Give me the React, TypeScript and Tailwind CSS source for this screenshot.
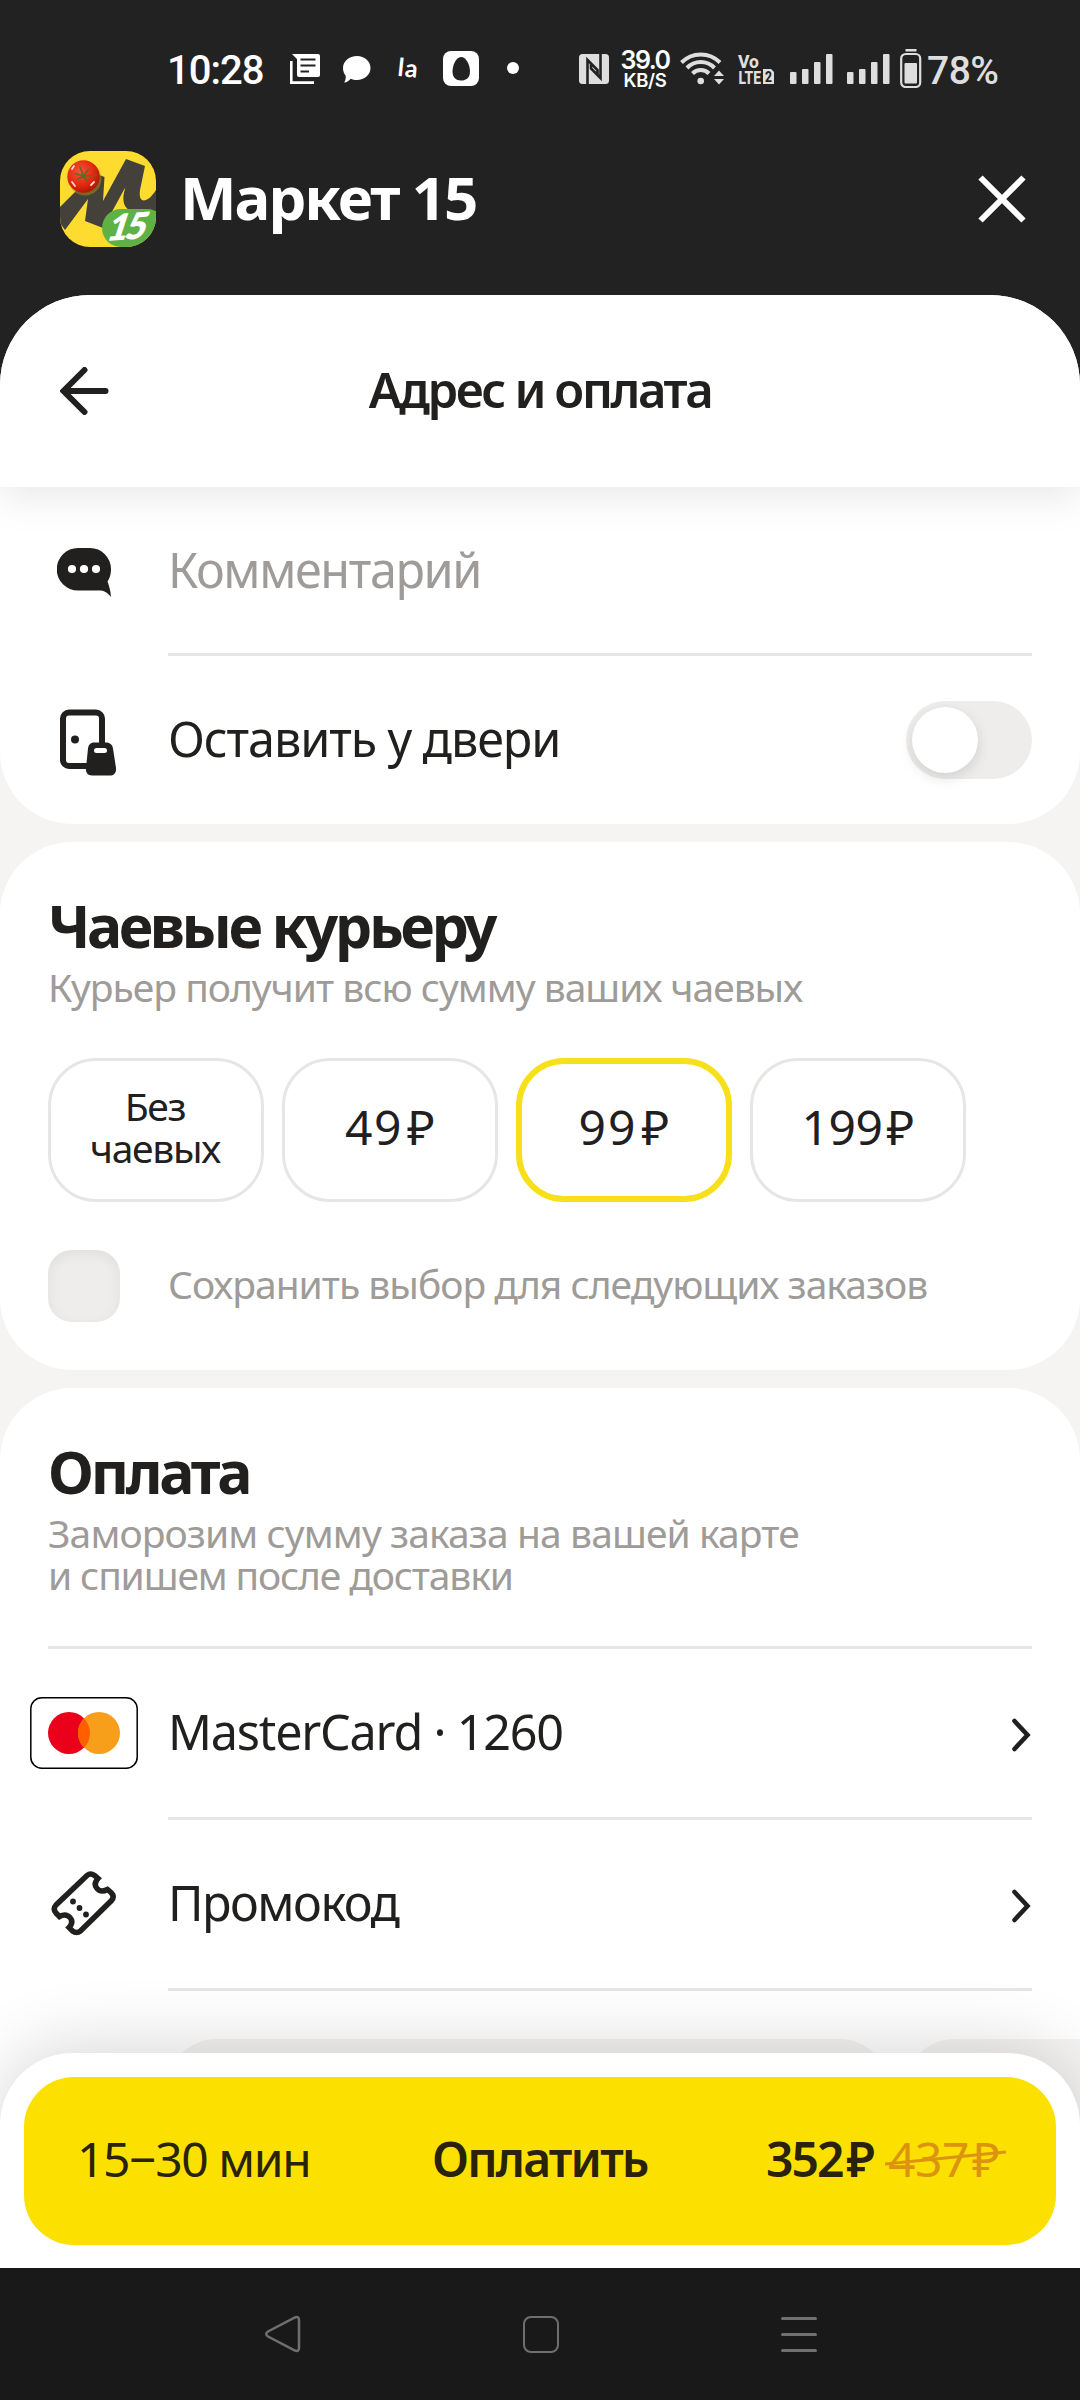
import { ReactNode } from "react";

const tips = [
  { id: 1, amount: "49", active: false, spacing: "tracking-[1.5px]" },
  { id: 2, amount: "99", active: true, spacing: "tracking-[2px]" },
  { id: 3, amount: "199", active: false, spacing: "tracking-[-0.5px]" },
];

function Signal() {
  return (
    <svg width="43" height="30" viewBox="0 0 43 30" fill="#dedede">
      <rect x="0" y="18" width="6.5" height="12" rx="1" />
      <rect x="12" y="15" width="6.5" height="15" rx="1" />
      <rect x="24" y="8" width="6.5" height="22" rx="1" />
      <rect x="36" y="0" width="6.5" height="30" rx="1" />
    </svg>
  );
}

function StatusBar() {
  return (
    <div className="flex h-[92px] shrink-0 items-start pl-[167px] font-['Roboto'] text-white">
      <span className="mt-[47px] w-[123px] text-[40px] font-medium leading-[48px] tracking-[-1px]">
        10:28
      </span>
      {/* news */}
      <svg className="mt-[54px]" width="30" height="30" viewBox="0 0 30 30">
        <path d="M2 0H28a2 2 0 0 1 2 2V21a2 2 0 0 1-2 2H9a2 2 0 0 1-2-2V5Z" fill="#fff" />
        <path d="M1.3 7V28.6H24" stroke="#fff" strokeWidth="2.6" fill="none" />
        <path d="M10.5 5.5H25.5M10.5 11.5H25.5M10.5 17.5H19" stroke="#222" strokeWidth="2.2" />
      </svg>
      {/* chat */}
      <svg className="ml-[23px] mt-[56px]" width="28" height="28" viewBox="0 0 28 28">
        <path d="M14 0C21.5 0 27.5 5.2 27.5 12S21.5 24 14 24C11.5 24 9.5 23.6 7.5 22.8 6 25 4 26.3 1.2 26.6 2.6 24 3 22 2.6 19.6 1 17.5 0 15 0 12 0 5.2 6.2 0 14 0Z" fill="#fff" />
      </svg>
      <span className="ml-[27px] mt-[53px] w-[24px] rotate-6 font-['Lato'] text-[25px] font-bold leading-[28px] tracking-[1px]">
        la
      </span>
      {/* egg */}
      <svg className="ml-[21px] mt-[51px]" width="36" height="35" viewBox="0 0 36 35">
        <rect width="36" height="35" rx="8" fill="#fff" />
        <path d="M18 6C23 6 27 14 27 20.5S23 29.5 18 29.5 9.5 26.5 9.5 20.5 13 6 18 6Z" fill="#222" />
      </svg>
      <span className="ml-[28px] mt-[62px] h-[12px] w-[12px] rounded-full bg-white" />
      {/* nfc */}
      <svg className="ml-[60px] mt-[54px]" width="30" height="30" viewBox="0 0 30 30">
        <rect width="30" height="30" rx="3.5" fill="#dedede" />
        <path d="M8.5 30V6L18.5 16V21M21.5 0V24L12 14.5V10" stroke="#222" strokeWidth="2.6" fill="none" />
      </svg>
      <div className="ml-[10px] mt-[49px] flex w-[52px] flex-col items-center font-['Inter'] font-semibold">
        <span className="text-[25px] leading-[23px] tracking-[-1.5px]">39.0</span>
        <span className="text-[18.5px] leading-[17px] tracking-[-0.3px]">KB/S</span>
      </div>
      {/* wifi */}
      <svg className="ml-[9px] mt-[51px]" width="45" height="34" viewBox="0 0 45 34">
        <g fill="none" stroke="#dedede" strokeWidth="4">
          <path d="M1.5 11.5A27 27 0 0 1 40 11.5" />
          <path d="M7 17A19 19 0 0 1 34.5 17" />
          <path d="M12.5 22.5A11.5 11.5 0 0 1 29 22.5" />
        </g>
        <circle cx="20.7" cy="30" r="3.3" fill="#dedede" />
        <path d="M34 25L39 19.5L44 25ZM34 28L39 33.5L44 28Z" fill="#dedede" />
      </svg>
      {/* volte */}
      <svg className="ml-[13px] mt-[53px] overflow-visible" width="37" height="32" viewBox="0 0 37 32">
        <g fill="#dedede" fontFamily="Roboto" fontWeight="800">
          <text x="0" y="14.5" fontSize="18" textLength="21" lengthAdjust="spacingAndGlyphs">Vo</text>
          <text x="0.5" y="31" fontSize="19" textLength="22.5" lengthAdjust="spacingAndGlyphs">LTE</text>
          <path d="M25 16H33L36 19V31H25Z" />
          <text x="27" y="29" fontSize="14" fill="#222" textLength="7" lengthAdjust="spacingAndGlyphs">2</text>
        </g>
      </svg>
      <div className="ml-[15px] mt-[54px]"><Signal /></div>
      <div className="ml-[14px] mt-[54px]"><Signal /></div>
      {/* battery */}
      <svg className="ml-[10px] mt-[49px]" width="22" height="39" viewBox="0 0 22 39">
        <rect x="5.5" y="0" width="11" height="2.5" fill="#dedede" />
        <rect x="1.2" y="5" width="19" height="33" rx="4.5" fill="none" stroke="#dedede" strokeWidth="2.2" />
        <rect x="4.5" y="14" width="12.5" height="20.5" rx="1" fill="#dedede" />
      </svg>
      <span className="ml-[5px] mt-[47px] text-[39px] font-medium leading-[48px] tracking-[-0.5px] text-[#dedede]">
        78%
      </span>
    </div>
  );
}

function MarketLogo() {
  return (
    <svg width="96" height="96" viewBox="0 0 96 96">
      <defs>
        <clipPath id="logoClip"><rect width="96" height="96" rx="30" /></clipPath>
        <radialGradient id="tomato" cx="0.4" cy="0.35" r="0.7">
          <stop offset="0" stopColor="#f4553a" />
          <stop offset="0.6" stopColor="#e2290f" />
          <stop offset="1" stopColor="#a81404" />
        </radialGradient>
      </defs>
      <g clipPath="url(#logoClip)">
        <rect width="96" height="96" fill="#fddb2f" />
        <path d="M0 56L34 22L44.5 26L43 50L66 8L85 15L80 39C78 53 87 53 96 39V60H56L63 50C62 46 64 41 65 37L43 77L25 70L28 48L5 79L0 72Z" fill="#43413a" />
        <path d="M54 59L65 37C62 48 63 55 69 59Z" fill="#fddb2f" />
        <circle cx="25" cy="28" r="16.5" fill="#b98a10" opacity="0.5" />
        <circle cx="23.5" cy="25.5" r="16.2" fill="url(#tomato)" />
        <path d="M23.5 25L15 22.5M23.5 25L20 16M23.5 25L28 19M23.5 25L36 24.5M23.5 25L27 30M23.5 25L18 28" stroke="#5d6b22" strokeWidth="1.6" strokeLinecap="round" />
        <path d="M12 31L15 35M12 18L14 15M31 34L34 31" stroke="#ffd6cc" strokeWidth="1.8" strokeLinecap="round" />
        <rect x="42" y="58" width="64" height="38" rx="19" fill="#5fb146" />
        <text
          fontFamily="Lato"
          fontSize="36"
          fontWeight="800"
          fill="#fff"
          textLength="39"
          transform="translate(45 90) rotate(-4) skewX(-22)"
        >
          15
        </text>
      </g>
    </svg>
  );
}

function Chevron() {
  return (
    <svg className="mt-[3px]" width="20" height="34" viewBox="0 0 20 34">
      <path d="M2.5 3L15.5 17L2.5 31" fill="none" stroke="#21201f" strokeWidth="4.6" strokeLinecap="round" />
    </svg>
  );
}

function Row({ icon, children, right }: { icon: ReactNode; children: ReactNode; right?: ReactNode }) {
  return (
    <div className="flex h-[168px] items-center pr-12">
      <div className="flex w-[168px] justify-center">{icon}</div>
      <div className="flex-1 pb-[4px] text-[48.5px] leading-[56px]">{children}</div>
      {right}
    </div>
  );
}

function Divider() {
  return <div className="ml-[168px] mr-12 h-[3px] bg-[#e7e6e5]" />;
}

export default function App() {
  return (
    <div className="flex h-[2400px] w-[1080px] flex-col overflow-hidden bg-[#222222] font-['Noto_Sans',sans-serif] text-[#21201f]">
      <StatusBar />

      <div className="flex h-[203px] shrink-0 items-start pl-[60px] pt-[59px]">
        <MarketLogo />
        <h1 className="ml-[24px] flex-1 text-[60px] font-bold leading-[92px] tracking-[-2.1px] text-white">
          Маркет 15
        </h1>
        <svg className="mr-[54px] mt-[24px]" width="48" height="48" viewBox="0 0 48 48">
          <path d="M2.5 2.5L45.5 45.5M45.5 2.5L2.5 45.5" stroke="#fff" strokeWidth="6" />
        </svg>
      </div>

      <div className="relative flex min-h-0 flex-1 flex-col overflow-hidden rounded-t-[90px] bg-[#f5f4f2]">
        {/* header */}
        <div className="relative z-10 flex h-[192px] shrink-0 items-center justify-center bg-white shadow-[0_8px_40px_rgba(0,0,0,0.1)]">
          <svg className="absolute left-[60px] top-[72px]" width="50" height="48" viewBox="0 0 50 48">
            <path d="M24.5 3L3.5 24L24.5 45M4 24H45.5" fill="none" stroke="#21201f" strokeWidth="6" strokeLinecap="round" />
          </svg>
          <h2 className="pb-[5px] text-[49px] font-semibold leading-[60px] tracking-[-2.4px]">Адрес и оплата</h2>
        </div>

        <div className="-mt-[2px] rounded-b-[72px] bg-white">
          <Row
            icon={
              <svg className="mt-[7px]" width="54" height="50" viewBox="0 0 54 50">
                <path d="M21 0H33A21 21 0 0 1 54 21C54 27 52.5 30.5 50.5 33.5C52 37.5 53.5 42 54 49C50 44 47 42.5 42 42.5H21A21 21 0 0 1 21 0Z" fill="#21201f" />
                <g fill="#fff">
                  <circle cx="15" cy="21" r="4.1" />
                  <circle cx="27" cy="21" r="4.1" />
                  <circle cx="39" cy="21" r="4.1" />
                </g>
              </svg>
            }
          >
            <span className="relative top-[2px] tracking-[-1.4px] text-[#9e9b98]">Комментарий</span>
          </Row>
          <Divider />
          <Row
            icon={
              <svg className="ml-[8px] mt-[6px]" width="56" height="68" viewBox="0 0 56 68">
                <rect x="3" y="3.5" width="39" height="53.5" rx="6" fill="none" stroke="#21201f" strokeWidth="6" />
                <circle cx="15" cy="30.5" r="4" fill="#21201f" />
                <path d="M34 33.5H46C50 33.5 52.5 36 53 39.5L56 59C56.5 63.5 54 66.5 50 66.5H32C27.5 66.5 25.5 63.5 26 59L28 39.5C28.5 36 30.5 33.5 34 33.5Z" fill="#21201f" />
                <rect x="34" y="39" width="13" height="5" rx="2.5" fill="#fff" />
              </svg>
            }
            right={
              <div className="flex h-[78px] w-[126px] items-center rounded-full bg-[#eeedec] pl-[6px]">
                <div className="h-[66px] w-[66px] rounded-full bg-white shadow-[0_5px_14px_rgba(0,0,0,0.12)]" />
              </div>
            }
          >
            <span className="tracking-[-1.1px]">Оставить у двери</span>
          </Row>
        </div>

        {/* tips */}
        <div className="mt-[18px] h-[528px] shrink-0 rounded-[72px] bg-white px-12 pt-[48px]">
          <h3 className="text-[59px] font-bold leading-[70px] tracking-[-3.4px]">Чаевые курьеру</h3>
          <p className="mt-[6px] text-[39px] leading-[42px] tracking-[-1px] text-[#9e9b98]">
            Курьер получит всю сумму ваших чаевых
          </p>
          <div className="mt-[50px] flex gap-[18px]">
            <button className="h-[144px] w-[216px] rounded-[48px] border-[3px] border-[#e7e6e5] pb-[6px] pr-[2px] text-center text-[39px] leading-[42px] tracking-[-1.3px]">
              Без
              <br />
              чаевых
            </button>
            {tips.map((tip) => (
              <button
                key={tip.id}
                className={`h-[144px] w-[216px] rounded-[48px] pb-[6px] text-[48px] ${
                  tip.active ? "border-[6px] border-[#f7df1a]" : "border-[3px] border-[#e7e6e5]"
                }`}
              >
                <span className={tip.spacing}>{tip.amount}</span>
                <span className="ml-[4px]">₽</span>
              </button>
            ))}
          </div>
          <div className="mt-[48px] flex items-center">
            <div className="h-[72px] w-[72px] rounded-[24px] bg-[#eeedec] shadow-[inset_0_4px_14px_rgba(0,0,0,0.06)]" />
            <span className="ml-[48px] pb-[4px] text-[39px] leading-[42px] tracking-[-1px] text-[#9e9b98]">
              Сохранить выбор для следующих заказов
            </span>
          </div>
        </div>

        {/* payment */}
        <div className="mt-[18px] h-[900px] shrink-0 rounded-t-[72px] bg-white">
          <div className="h-[258px] px-12 pt-[48px]">
            <h3 className="text-[59px] font-bold leading-[70px] tracking-[-3.2px]">Оплата</h3>
            <p className="mt-[6px] text-[39px] leading-[42px] text-[#9e9b98]">
              <span className="tracking-[-0.9px]">Заморозим сумму заказа на вашей карте</span>
              <br />
              <span className="tracking-[-1.15px]">и спишем после доставки</span>
            </p>
          </div>
          <div className="mx-12 h-[3px] bg-[#e7e6e5]" />
          <Row
            icon={
              <svg width="108" height="72" viewBox="0 0 108 72">
                <rect x="0.8" y="0.8" width="106.4" height="70.4" rx="11" fill="#fff" stroke="#000" strokeWidth="1.5" />
                <circle cx="39" cy="36" r="21" fill="#eb001b" />
                <circle cx="69" cy="36" r="21" fill="#f79e1b" />
                <path d="M54 21.3A21 21 0 0 1 54 50.7A21 21 0 0 1 54 21.3Z" fill="#ff5f00" />
              </svg>
            }
            right={<Chevron />}
          >
            <span className="tracking-[-1.2px]">MasterCard · 1260</span>
          </Row>
          <Divider />
          <Row
            icon={
              <svg width="66" height="66" viewBox="0 0 66 66">
                <path d="M36 4.5Q39.5 1.5 43.5 4.5L47 7.5Q42 13 46 17.5T56.5 18.5L60 21.5Q64 25.5 60.5 29.5L29.5 60Q25.5 63 21.5 60L18 56.5Q23 51 19 46.5T8.5 45.5L5 42Q1.5 38 5 34Z" fill="none" stroke="#21201f" strokeWidth="5.5" />
                <g fill="#21201f">
                  <circle cx="22" cy="30.5" r="2.9" />
                  <circle cx="28.5" cy="37" r="2.9" />
                  <circle cx="35" cy="43.5" r="2.9" />
                </g>
              </svg>
            }
            right={<Chevron />}
          >
            <span className="tracking-[-1.5px]">Промокод</span>
          </Row>
          <Divider />
          <div className="ml-[168px] mt-[48px] flex gap-[18px]">
            <div className="h-[120px] w-[720px] shrink-0 rounded-[48px] bg-[#f5f4f2]" />
            <div className="h-[120px] w-[300px] shrink-0 rounded-[48px] bg-[#f5f4f2]" />
          </div>
        </div>

        {/* pay bar */}
        <div className="absolute inset-x-0 bottom-[132px] z-10 h-[215px] rounded-t-[72px] bg-white px-6 pt-[24px] shadow-[0_-6px_70px_rgba(0,0,0,0.16)]">
          <button className="flex h-[168px] w-full items-center rounded-[50px] bg-[#fce000] pb-[5px] text-[48px] text-[#28230a]">
            <span className="ml-[53px] w-[355px] text-left tracking-[-1.4px]">15−30 мин</span>
            <span className="w-[333px] text-left font-semibold tracking-[-1.8px]">Оплатить</span>
            <span className="w-[111px] whitespace-nowrap font-semibold">
              <span className="tracking-[-2px]">352</span>
              <span className="ml-[4px]">₽</span>
            </span>
            <span className="relative ml-[12px] text-[#dc9410]">
              <span className="tracking-[-0.5px]">437</span>
              <span className="ml-[3px]">₽</span>
              <svg className="absolute -left-[3px] top-[26px]" width="121" height="18" viewBox="0 0 121 18">
                <path d="M0 15L121 3" stroke="#dc9410" strokeWidth="3" />
              </svg>
            </span>
          </button>
        </div>

        {/* android nav */}
        <div className="absolute inset-x-0 bottom-0 z-20 flex h-[132px] items-center bg-[#191919] pl-[264px]">
          <svg width="38" height="38" viewBox="0 0 38 38">
            <path d="M31 2.5Q35 1 35 5V33Q35 37 31 35.5L4 21.5Q0.5 19 4 16.5Z" fill="none" stroke="#6f6f6f" strokeWidth="2.5" />
          </svg>
          <div className="ml-[221px] h-[37px] w-[36px] rounded-[8px] border-[2.5px] border-[#6f6f6f]" />
          <div className="ml-[222px] flex w-[36px] flex-col gap-[13px]">
            <span className="h-[3px] rounded bg-[#6f6f6f]" />
            <span className="h-[3px] rounded bg-[#6f6f6f]" />
            <span className="h-[3px] rounded bg-[#6f6f6f]" />
          </div>
        </div>
      </div>
    </div>
  );
}
